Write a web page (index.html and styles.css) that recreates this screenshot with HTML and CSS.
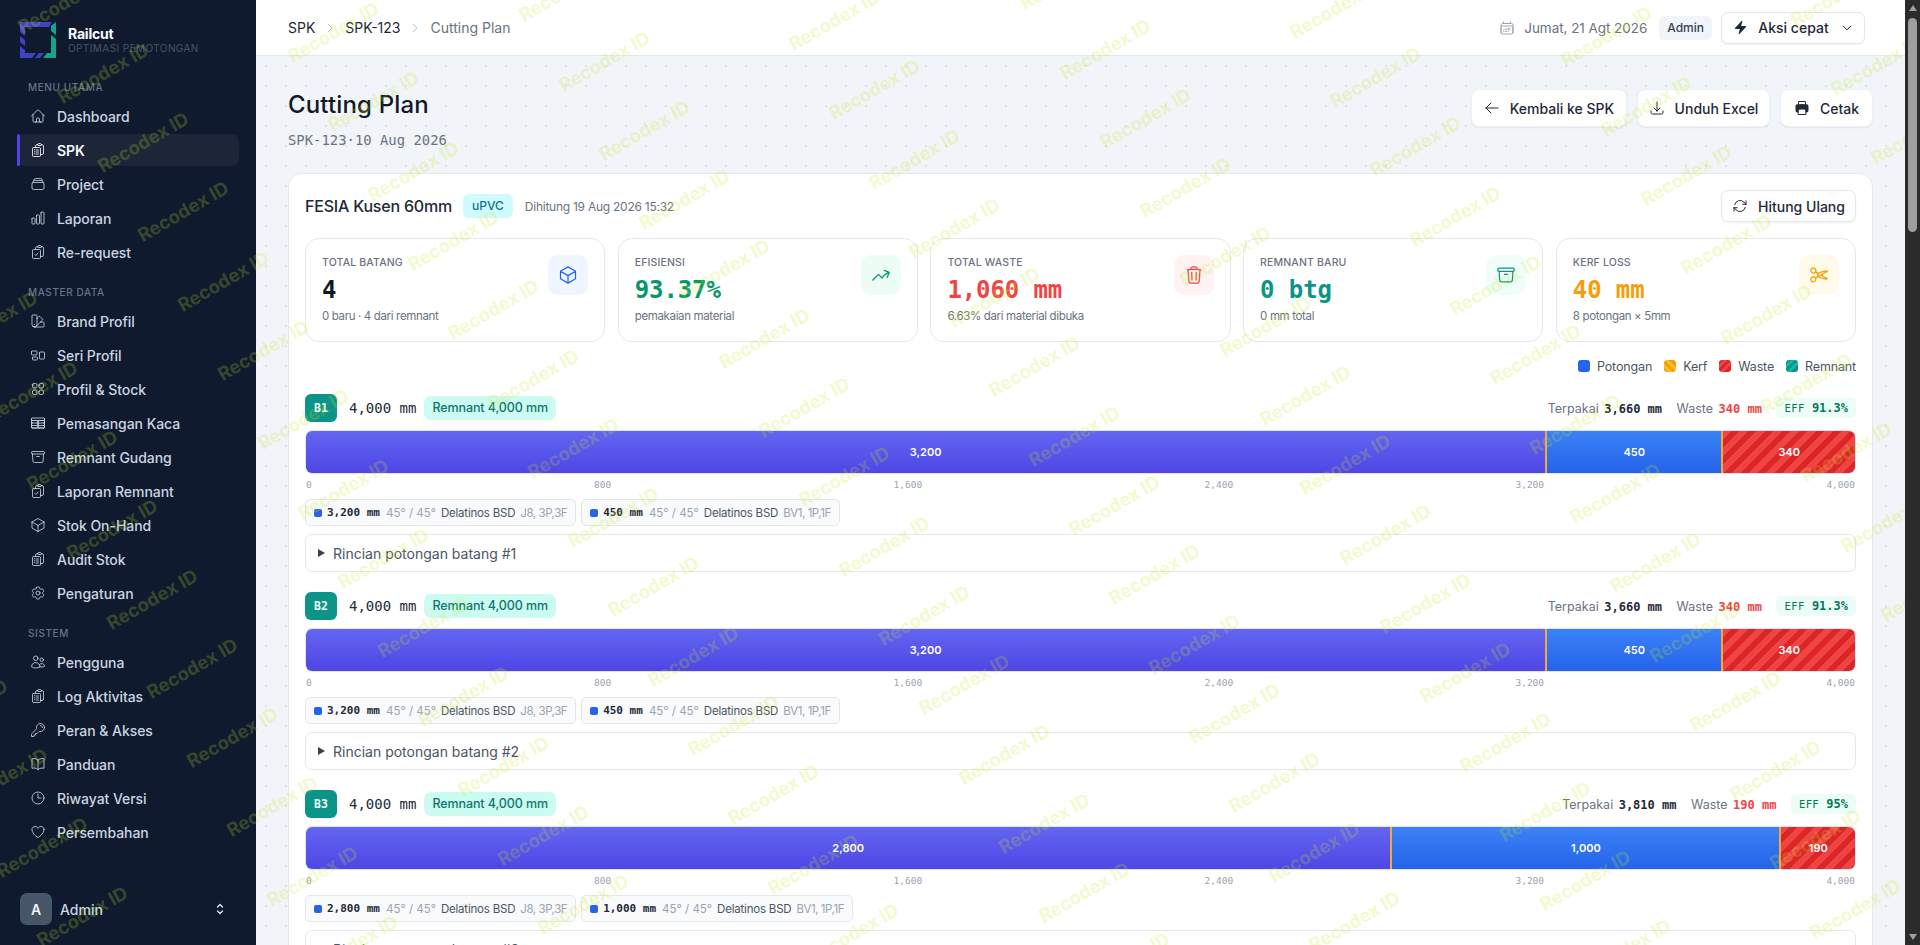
FILE: index.html
```html
<!DOCTYPE html>
<html lang="id">
<head>
<meta charset="utf-8">
<title>Cutting Plan - Railcut</title>
<link rel="stylesheet" href="styles.css">
</head>
<body>
<svg class="sprite" xmlns="http://www.w3.org/2000/svg">
  <symbol id="i-home" viewBox="0 0 24 24"><path d="m2.25 12 8.954-8.955c.44-.439 1.152-.439 1.591 0L21.75 12M4.5 9.75v10.125c0 .621.504 1.125 1.125 1.125H9.75v-4.875c0-.621.504-1.125 1.125-1.125h2.25c.621 0 1.125.504 1.125 1.125V21h4.125c.621 0 1.125-.504 1.125-1.125V9.75M8.25 21h8.25"/></symbol>
  <symbol id="i-list" viewBox="0 0 24 24"><path d="M9 12h3.75M9 15h3.75M9 18h3.75m3 .75H18a2.25 2.25 0 0 0 2.25-2.25V6.108c0-1.135-.845-2.098-1.976-2.192a48.424 48.424 0 0 0-1.123-.08m-5.801 0c-.065.21-.1.433-.1.664 0 .414.336.75.75.75h4.5a.75.75 0 0 0 .75-.75 2.25 2.25 0 0 0-.1-.664m-5.8 0A2.251 2.251 0 0 1 13.5 2.25H15c1.012 0 1.867.668 2.15 1.586m-5.8 0c-.376.023-.75.05-1.124.08C9.095 4.01 8.25 4.973 8.25 6.108V8.25m0 0H4.875c-.621 0-1.125.504-1.125 1.125v11.25c0 .621.504 1.125 1.125 1.125h9.75c.621 0 1.125-.504 1.125-1.125V9.375c0-.621-.504-1.125-1.125-1.125H8.25ZM6.75 12h.008v.008H6.75V12Zm0 3h.008v.008H6.75V15Zm0 3h.008v.008H6.75V18Z"/></symbol>
  <symbol id="i-stack" viewBox="0 0 24 24"><path d="M6 6.878V6a2.25 2.25 0 0 1 2.25-2.25h7.5A2.25 2.25 0 0 1 18 6v.878m-12 0c.235-.083.487-.128.75-.128h10.5c.263 0 .515.045.75.128m-12 0A2.25 2.25 0 0 0 4.5 9v.878m13.5-3A2.25 2.25 0 0 1 19.5 9v.878m0 0a2.246 2.246 0 0 0-.75-.128H5.25c-.263 0-.515.045-.75.128m15 0A2.25 2.25 0 0 1 21 12v6a2.25 2.25 0 0 1-2.25 2.25H5.25A2.25 2.25 0 0 1 3 18v-6c0-.98.626-1.813 1.5-2.122"/></symbol>
  <symbol id="i-chart" viewBox="0 0 24 24"><path d="M3 13.125C3 12.504 3.504 12 4.125 12h2.25c.621 0 1.125.504 1.125 1.125v6.75C7.5 20.496 6.996 21 6.375 21h-2.25A1.125 1.125 0 0 1 3 19.875v-6.75ZM9.75 8.625c0-.621.504-1.125 1.125-1.125h2.25c.621 0 1.125.504 1.125 1.125v11.25c0 .621-.504 1.125-1.125 1.125h-2.25a1.125 1.125 0 0 1-1.125-1.125V8.625ZM16.5 4.125c0-.621.504-1.125 1.125-1.125h2.25C20.496 3 21 3.504 21 4.125v15.75c0 .621-.504 1.125-1.125 1.125h-2.25a1.125 1.125 0 0 1-1.125-1.125V4.125Z"/></symbol>
  <symbol id="i-check" viewBox="0 0 24 24"><path d="M11.35 3.836c-.065.21-.1.433-.1.664 0 .414.336.75.75.75h4.5a.75.75 0 0 0 .75-.75 2.25 2.25 0 0 0-.1-.664m-5.8 0A2.251 2.251 0 0 1 13.5 2.25H15c1.012 0 1.867.668 2.15 1.586m-5.8 0c-.376.023-.75.05-1.124.08C9.095 4.01 8.25 4.973 8.25 6.108V8.25m8.9-4.414c.376.023.75.05 1.124.08 1.131.094 1.976 1.057 1.976 2.192V16.5A2.25 2.25 0 0 1 18 18.75h-2.25m-7.5-10.5H4.875c-.621 0-1.125.504-1.125 1.125v11.25c0 .621.504 1.125 1.125 1.125h9.75c.621 0 1.125-.504 1.125-1.125V18.75m-7.5-10.5h6.375c.621 0 1.125.504 1.125 1.125v9.375m-8.25-3 1.5 1.5 3-3.75"/></symbol>
  <symbol id="i-swatch" viewBox="0 0 24 24"><path d="M4.098 19.902a3.75 3.75 0 0 0 5.304 0l6.401-6.402M6.75 21A3.75 3.75 0 0 1 3 17.25V4.125C3 3.504 3.504 3 4.125 3h5.25c.621 0 1.125.504 1.125 1.125v4.072M6.75 21a3.75 3.75 0 0 0 3.75-3.75V8.197M6.75 21h13.125c.621 0 1.125-.504 1.125-1.125v-5.25c0-.621-.504-1.125-1.125-1.125h-4.072M10.5 8.197l2.88-2.88c.438-.439 1.15-.439 1.59 0l3.712 3.713c.44.44.44 1.152 0 1.59l-2.879 2.88M6.75 17.25h.008v.008H6.75v-.008Z"/></symbol>
  <symbol id="i-group" viewBox="0 0 24 24"><path d="M2.25 7.125C2.25 6.504 2.754 6 3.375 6h6c.621 0 1.125.504 1.125 1.125v3.75c0 .621-.504 1.125-1.125 1.125h-6a1.125 1.125 0 0 1-1.125-1.125v-3.75ZM14.25 8.625c0-.621.504-1.125 1.125-1.125h5.25c.621 0 1.125.504 1.125 1.125v8.25c0 .621-.504 1.125-1.125 1.125h-5.25a1.125 1.125 0 0 1-1.125-1.125v-8.25ZM3.75 16.125c0-.621.504-1.125 1.125-1.125h5.25c.621 0 1.125.504 1.125 1.125v2.25c0 .621-.504 1.125-1.125 1.125h-5.25a1.125 1.125 0 0 1-1.125-1.125v-2.25Z"/></symbol>
  <symbol id="i-grid" viewBox="0 0 24 24"><path d="M3.75 6A2.25 2.25 0 0 1 6 3.75h2.25A2.25 2.25 0 0 1 10.5 6v2.25a2.25 2.25 0 0 1-2.25 2.25H6a2.25 2.25 0 0 1-2.25-2.25V6ZM3.75 15.75A2.25 2.25 0 0 1 6 13.5h2.25a2.25 2.25 0 0 1 2.25 2.25V18a2.25 2.25 0 0 1-2.25 2.25H6A2.25 2.25 0 0 1 3.75 18v-2.25ZM13.5 6a2.25 2.25 0 0 1 2.25-2.25H18A2.25 2.25 0 0 1 20.25 6v2.25A2.25 2.25 0 0 1 18 10.5h-2.25a2.25 2.25 0 0 1-2.25-2.25V6ZM13.5 15.75a2.25 2.25 0 0 1 2.25-2.25H18a2.25 2.25 0 0 1 2.25 2.25V18A2.25 2.25 0 0 1 18 20.25h-2.25A2.25 2.25 0 0 1 13.5 18v-2.25Z"/></symbol>
  <symbol id="i-table" viewBox="0 0 24 24"><path d="M3.375 19.5h17.25m-17.25 0a1.125 1.125 0 0 1-1.125-1.125M3.375 19.5h7.5c.621 0 1.125-.504 1.125-1.125m-9.75 0V5.625m0 12.75v-1.5c0-.621.504-1.125 1.125-1.125m18.375 2.625V5.625m0 12.75c0 .621-.504 1.125-1.125 1.125m1.125-1.125v-1.5c0-.621-.504-1.125-1.125-1.125m0 3.75h-7.5A1.125 1.125 0 0 1 12 18.375m9.75-12.75c0-.621-.504-1.125-1.125-1.125H3.375c-.621 0-1.125.504-1.125 1.125m19.5 0v1.5c0 .621-.504 1.125-1.125 1.125M2.25 5.625v1.5c0 .621.504 1.125 1.125 1.125m0 0h17.25m-17.25 0h7.5c.621 0 1.125.504 1.125 1.125M3.375 8.25c-.621 0-1.125.504-1.125 1.125v1.5c0 .621.504 1.125 1.125 1.125m17.25-3.75h-7.5c-.621 0-1.125.504-1.125 1.125m8.625-1.125c.621 0 1.125.504 1.125 1.125v1.5c0 .621-.504 1.125-1.125 1.125m-17.25 0h7.5m-7.5 0c-.621 0-1.125.504-1.125 1.125v1.5c0 .621.504 1.125 1.125 1.125M12 10.875v-1.5m0 1.5c0 .621-.504 1.125-1.125 1.125M12 10.875c0 .621.504 1.125 1.125 1.125m-2.25 0c.621 0 1.125.504 1.125 1.125M13.125 12h7.5m-7.5 0c-.621 0-1.125.504-1.125 1.125M20.625 12c.621 0 1.125.504 1.125 1.125v1.5c0 .621-.504 1.125-1.125 1.125m-17.25 0h7.5M12 14.625v-1.5m0 1.5c0 .621-.504 1.125-1.125 1.125M12 14.625c0 .621.504 1.125 1.125 1.125m-2.25 0c.621 0 1.125.504 1.125 1.125m0 1.5v-1.5m0 0c0-.621.504-1.125 1.125-1.125m0 0h7.5"/></symbol>
  <symbol id="i-archive" viewBox="0 0 24 24"><path d="m20.25 7.5-.625 10.632a2.25 2.25 0 0 1-2.247 2.118H6.622a2.25 2.25 0 0 1-2.247-2.118L3.75 7.5M10 11.25h4M3.375 7.5h17.25c.621 0 1.125-.504 1.125-1.125v-1.5c0-.621-.504-1.125-1.125-1.125H3.375c-.621 0-1.125.504-1.125 1.125v1.5c0 .621.504 1.125 1.125 1.125Z"/></symbol>
  <symbol id="i-cube" viewBox="0 0 24 24"><path d="m21 7.5-9-5.25L3 7.5m18 0-9 5.25m9-5.25v9l-9 5.25M3 7.5l9 5.25M3 7.5v9l9 5.25m0-9v9"/></symbol>
  <symbol id="i-cog" viewBox="0 0 24 24"><path d="M9.594 3.94c.09-.542.56-.94 1.11-.94h2.593c.55 0 1.02.398 1.11.94l.213 1.281c.063.374.313.686.645.87.074.04.147.083.22.127.325.196.72.257 1.075.124l1.217-.456a1.125 1.125 0 0 1 1.37.49l1.296 2.247a1.125 1.125 0 0 1-.26 1.431l-1.003.827c-.293.241-.438.613-.43.992a7.723 7.723 0 0 1 0 .255c-.008.378.137.75.43.991l1.004.827c.424.35.534.955.26 1.43l-1.298 2.247a1.125 1.125 0 0 1-1.369.491l-1.217-.456c-.355-.133-.75-.072-1.076.124a6.47 6.47 0 0 1-.22.128c-.331.183-.581.495-.644.869l-.213 1.281c-.09.543-.56.94-1.11.94h-2.594c-.55 0-1.019-.398-1.11-.94l-.213-1.281c-.062-.374-.312-.686-.644-.87a6.52 6.52 0 0 1-.22-.127c-.325-.196-.72-.257-1.076-.124l-1.217.456a1.125 1.125 0 0 1-1.369-.49l-1.297-2.247a1.125 1.125 0 0 1 .26-1.431l1.004-.827c.292-.24.437-.613.43-.991a6.932 6.932 0 0 1 0-.255c.007-.38-.138-.751-.43-.992l-1.004-.827a1.125 1.125 0 0 1-.26-1.43l1.297-2.247a1.125 1.125 0 0 1 1.37-.491l1.216.456c.356.133.751.072 1.076-.124.072-.044.146-.086.22-.128.332-.183.582-.495.644-.869l.214-1.28Z"/><path d="M15 12a3 3 0 1 1-6 0 3 3 0 0 1 6 0Z"/></symbol>
  <symbol id="i-users" viewBox="0 0 24 24"><path d="M15 19.128a9.38 9.38 0 0 0 2.625.372 9.337 9.337 0 0 0 4.121-.952 4.125 4.125 0 0 0-7.533-2.493M15 19.128v-.003c0-1.113-.285-2.16-.786-3.07M15 19.128v.106A12.318 12.318 0 0 1 8.624 21c-2.331 0-4.512-.645-6.374-1.766l-.001-.109a6.375 6.375 0 0 1 11.964-3.07M12 6.375a3.375 3.375 0 1 1-6.75 0 3.375 3.375 0 0 1 6.75 0Zm8.25 2.25a2.625 2.625 0 1 1-5.25 0 2.625 2.625 0 0 1 5.25 0Z"/></symbol>
  <symbol id="i-key" viewBox="0 0 24 24"><path d="M15.75 5.25a3 3 0 0 1 3 3m3 0a6 6 0 0 1-7.029 5.912c-.563-.097-1.159.026-1.563.43L10.5 17.25H8.25v2.25H6v2.25H2.25v-2.818c0-.597.237-1.17.659-1.591l6.499-6.499c.404-.404.527-1 .43-1.563A6 6 0 1 1 21.75 8.25Z"/></symbol>
  <symbol id="i-book" viewBox="0 0 24 24"><path d="M12 6.042A8.967 8.967 0 0 0 6 3.75c-1.052 0-2.062.18-3 .512v14.25A8.987 8.987 0 0 1 6 18c2.305 0 4.408.867 6 2.292m0-14.25a8.966 8.966 0 0 1 6-2.292c1.052 0 2.062.18 3 .512v14.25A8.987 8.987 0 0 0 18 18a8.967 8.967 0 0 0-6 2.292m0-14.25v14.25"/></symbol>
  <symbol id="i-clock" viewBox="0 0 24 24"><path d="M12 6v6h4.5m4.5 0a9 9 0 1 1-18 0 9 9 0 0 1 18 0Z"/></symbol>
  <symbol id="i-heart" viewBox="0 0 24 24"><path d="M21 8.25c0-2.485-2.099-4.5-4.688-4.5-1.935 0-3.597 1.126-4.312 2.733-.715-1.607-2.377-2.733-4.312-2.733C5.1 3.75 3 5.765 3 8.25c0 7.22 9 12 9 12s9-4.78 9-12Z"/></symbol>
  <symbol id="i-updown" viewBox="0 0 24 24"><path d="M8.25 15 12 18.75 15.75 15m-7.5-6L12 5.25 15.75 9"/></symbol>
  <symbol id="i-cal" viewBox="0 0 24 24"><path d="M6.75 3v2.25M17.25 3v2.25M3 18.75V7.5a2.25 2.25 0 0 1 2.25-2.25h13.5A2.25 2.25 0 0 1 21 7.5v11.25m-18 0A2.25 2.25 0 0 0 5.25 21h13.5A2.25 2.25 0 0 0 21 18.75m-18 0v-7.5A2.25 2.25 0 0 1 5.25 9h13.5A2.25 2.25 0 0 1 21 11.25v7.5m-9-6h.008v.008H12v-.008ZM12 15h.008v.008H12V15Zm0 2.25h.008v.008H12v-.008ZM9.75 15h.008v.008H9.75V15Zm0 2.25h.008v.008H9.75v-.008ZM7.5 15h.008v.008H7.5V15Zm0 2.25h.008v.008H7.5v-.008Zm6.75-4.5h.008v.008h-.008v-.008Zm0 2.25h.008v.008h-.008V15Zm0 2.25h.008v.008h-.008v-.008Zm2.25-4.5h.008v.008H16.5v-.008Zm0 2.25h.008v.008H16.5V15Z"/></symbol>
  <symbol id="i-down" viewBox="0 0 24 24"><path d="m19.5 8.25-7.5 7.5-7.5-7.5"/></symbol>
  <symbol id="i-right" viewBox="0 0 24 24"><path d="m8.25 4.5 7.5 7.5-7.5 7.5"/></symbol>
  <symbol id="i-left" viewBox="0 0 24 24"><path d="M10.5 19.5 3 12m0 0 7.5-7.5M3 12h18"/></symbol>
  <symbol id="i-tray" viewBox="0 0 24 24"><path d="M3 16.5v2.25A2.25 2.25 0 0 0 5.25 21h13.5A2.25 2.25 0 0 0 21 18.75V16.5M16.5 12 12 16.5m0 0L7.5 12m4.5 4.5V3"/></symbol>
  <symbol id="i-refresh" viewBox="0 0 24 24"><path d="M16.023 9.348h4.992v-.001M2.985 19.644v-4.992m0 0h4.992m-4.993 0 3.181 3.183a8.25 8.25 0 0 0 13.803-3.7M4.031 9.865a8.25 8.25 0 0 1 13.803-3.7l3.181 3.182m0-4.991v4.99"/></symbol>
  <symbol id="i-trend" viewBox="0 0 24 24"><path d="M2.25 18 9 11.25l4.306 4.306a11.95 11.95 0 0 1 5.814-5.518l2.74-1.22m0 0-5.94-2.281m5.94 2.28-2.28 5.941"/></symbol>
  <symbol id="i-trash" viewBox="0 0 24 24"><path d="m14.74 9-.346 9m-4.788 0L9.26 9m9.968-3.21c.342.052.682.107 1.022.166m-1.022-.165L18.16 19.673a2.25 2.25 0 0 1-2.244 2.077H8.084a2.25 2.25 0 0 1-2.244-2.077L4.772 5.79m14.456 0a48.108 48.108 0 0 0-3.478-.397m-12 .562c.34-.059.68-.114 1.022-.165m0 0a48.11 48.11 0 0 1 3.478-.397m7.5 0v-.916c0-1.18-.91-2.164-2.09-2.201a51.964 51.964 0 0 0-3.32 0c-1.18.037-2.09 1.022-2.09 2.201v.916m7.5 0a48.667 48.667 0 0 0-7.5 0"/></symbol>
  <symbol id="i-scissors" viewBox="0 0 24 24"><path d="m7.848 8.25 1.536.887M7.848 8.25a3 3 0 1 1-5.196-3 3 3 0 0 1 5.196 3Zm1.536.887a2.165 2.165 0 0 1 1.083 1.839c.005.351.054.695.14 1.024M9.384 9.137l2.077 1.199M7.848 15.75l1.536-.887m-1.536.887a3 3 0 1 1-5.196 3 3 3 0 0 1 5.196-3Zm1.536-.887a2.165 2.165 0 0 0 1.083-1.838c.005-.352.054-.695.14-1.025m-1.223 2.863 2.077-1.199m0-3.328a4.323 4.323 0 0 1 2.068-1.379l5.325-1.628a4.5 4.5 0 0 1 2.48-.044l.803.215-7.794 4.5m-2.882-1.664A4.33 4.33 0 0 0 10.607 12m3.736 0 7.794 4.5-.802.215a4.5 4.5 0 0 1-2.48-.043l-5.326-1.629a4.324 4.324 0 0 1-2.068-1.379M14.343 12l-2.882 1.664"/></symbol>
  <symbol id="i-bolt" viewBox="0 0 24 24"><path class="solid" d="M14.615 1.595a.75.75 0 0 1 .359.852L12.982 9.75h7.268a.75.75 0 0 1 .548 1.262l-10.5 11.25a.75.75 0 0 1-1.272-.71l1.992-7.302H3.75a.75.75 0 0 1-.548-1.262l10.5-11.25a.75.75 0 0 1 .913-.143Z"/></symbol>
  <symbol id="i-print" viewBox="0 0 24 24"><path class="solid" fill-rule="evenodd" d="M7.875 1.5C6.839 1.5 6 2.34 6 3.375v2.99c-.426.053-.851.11-1.274.174-1.454.218-2.476 1.483-2.476 2.917v6.294a3 3 0 0 0 3 3h.27l-.155 1.705A1.875 1.875 0 0 0 7.232 22.5h9.536a1.875 1.875 0 0 0 1.867-2.045l-.155-1.705h.27a3 3 0 0 0 3-3V9.456c0-1.434-1.022-2.7-2.476-2.917A48.716 48.716 0 0 0 18 6.366V3.375c0-1.036-.84-1.875-1.875-1.875h-8.25ZM16.5 6.205v-2.83A.375.375 0 0 0 16.125 3h-8.25a.375.375 0 0 0-.375.375v2.83a49.353 49.353 0 0 1 9 0Zm-.217 8.265c.178.018.317.16.333.337l.526 5.784a.375.375 0 0 1-.374.409H7.232a.375.375 0 0 1-.374-.409l.526-5.784a.373.373 0 0 1 .333-.337 41.741 41.741 0 0 1 8.566 0Z"/></symbol>
</svg>

<div class="app">
  <aside class="sidebar">
    <div class="brand">
      <svg class="logo" viewBox="0 0 36 36">
        <polygon class="logo-blue" points="0,0 32,0 29,5 5,5 5,14 0,10"/>
        <polygon class="logo-blue" points="0,14 5,18 5,24 0,20"/>
        <polygon class="logo-blue" points="0,24 5,28 5,31 16,31 12,36 0,36"/>
        <polygon class="logo-blue" points="19,31 24,31 20,36 15,36"/>
        <polygon class="logo-teal" points="36,0 36,13 31,9 31,4"/>
        <polygon class="logo-teal" points="31,13 36,17 36,36 23,36 27,31 31,31"/>
      </svg>
      <div class="brand-text">
        <div class="brand-name">Railcut</div>
        <div class="brand-sub">OPTIMASI PEMOTONGAN</div>
      </div>
    </div>

    <div class="nav-label">MENU UTAMA</div>
    <nav class="nav">
      <a class="nav-item"><svg class="ic"><use href="#i-home"/></svg>Dashboard</a>
      <a class="nav-item active"><svg class="ic"><use href="#i-list"/></svg>SPK</a>
      <a class="nav-item"><svg class="ic"><use href="#i-stack"/></svg>Project</a>
      <a class="nav-item"><svg class="ic"><use href="#i-chart"/></svg>Laporan</a>
      <a class="nav-item"><svg class="ic"><use href="#i-check"/></svg>Re-request</a>
    </nav>
    <div class="nav-label">MASTER DATA</div>
    <nav class="nav">
      <a class="nav-item"><svg class="ic"><use href="#i-swatch"/></svg>Brand Profil</a>
      <a class="nav-item"><svg class="ic"><use href="#i-group"/></svg>Seri Profil</a>
      <a class="nav-item"><svg class="ic"><use href="#i-grid"/></svg>Profil &amp; Stock</a>
      <a class="nav-item"><svg class="ic"><use href="#i-table"/></svg>Pemasangan Kaca</a>
      <a class="nav-item"><svg class="ic"><use href="#i-archive"/></svg>Remnant Gudang</a>
      <a class="nav-item"><svg class="ic"><use href="#i-check"/></svg>Laporan Remnant</a>
      <a class="nav-item"><svg class="ic"><use href="#i-cube"/></svg>Stok On-Hand</a>
      <a class="nav-item"><svg class="ic"><use href="#i-list"/></svg>Audit Stok</a>
      <a class="nav-item"><svg class="ic"><use href="#i-cog"/></svg>Pengaturan</a>
    </nav>
    <div class="nav-label">SISTEM</div>
    <nav class="nav">
      <a class="nav-item"><svg class="ic"><use href="#i-users"/></svg>Pengguna</a>
      <a class="nav-item"><svg class="ic"><use href="#i-list"/></svg>Log Aktivitas</a>
      <a class="nav-item"><svg class="ic"><use href="#i-key"/></svg>Peran &amp; Akses</a>
      <a class="nav-item"><svg class="ic"><use href="#i-book"/></svg>Panduan</a>
      <a class="nav-item"><svg class="ic"><use href="#i-clock"/></svg>Riwayat Versi</a>
      <a class="nav-item"><svg class="ic"><use href="#i-heart"/></svg>Persembahan</a>
    </nav>

    <div class="user">
      <div class="avatar">A</div>
      <div class="user-name">Admin</div>
      <svg class="ic user-caret"><use href="#i-updown"/></svg>
    </div>
  </aside>

  <div class="main">
    <header class="topbar">
      <div class="crumbs">
        <a class="crumb">SPK</a>
        <svg class="ic crumb-sep"><use href="#i-right"/></svg>
        <a class="crumb">SPK-123</a>
        <svg class="ic crumb-sep"><use href="#i-right"/></svg>
        <span class="crumb-cur">Cutting Plan</span>
      </div>
      <div class="top-right">
        <svg class="ic date-ic"><use href="#i-cal"/></svg>
        <span class="date">Jumat, 21 Agt 2026</span>
        <span class="role">Admin</span>
        <button class="btn btn-quick"><svg class="ic ic-solid"><use href="#i-bolt"/></svg>Aksi cepat<svg class="ic caret"><use href="#i-down"/></svg></button>
      </div>
    </header>

    <main class="content">
      <div class="page-head">
        <div>
          <h1 class="title">Cutting Plan</h1>
          <div class="subtitle">SPK-123·10 Aug 2026</div>
        </div>
        <div class="actions">
          <button class="btn btn-lg btn-back"><svg class="ic"><use href="#i-left"/></svg>Kembali ke SPK</button>
          <button class="btn btn-lg btn-excel"><svg class="ic"><use href="#i-tray"/></svg>Unduh Excel</button>
          <button class="btn btn-lg btn-print"><svg class="ic ic-solid"><use href="#i-print"/></svg>Cetak</button>
        </div>
      </div>

      <section class="card">
        <div class="card-head">
          <div class="card-title-wrap">
            <h2 class="card-title">FESIA Kusen 60mm</h2>
            <span class="pill-cyan">uPVC</span>
            <span class="computed">Dihitung 19 Aug 2026 15:32</span>
          </div>
          <button class="btn btn-sm"><svg class="ic"><use href="#i-refresh"/></svg>Hitung Ulang</button>
        </div>

        <div class="stats">
          <div class="stat">
            <div class="stat-body"><div class="stat-label">TOTAL BATANG</div><div class="stat-val c-ink">4</div><div class="stat-sub">0 baru · 4 dari remnant</div></div>
            <div class="stat-ic bg-blue"><svg class="ic"><use href="#i-cube"/></svg></div>
          </div>
          <div class="stat">
            <div class="stat-body"><div class="stat-label">EFISIENSI</div><div class="stat-val c-green">93.37%</div><div class="stat-sub">pemakaian material</div></div>
            <div class="stat-ic bg-green"><svg class="ic"><use href="#i-trend"/></svg></div>
          </div>
          <div class="stat">
            <div class="stat-body"><div class="stat-label">TOTAL WASTE</div><div class="stat-val c-red">1,060 mm</div><div class="stat-sub">6.63% dari material dibuka</div></div>
            <div class="stat-ic bg-red"><svg class="ic"><use href="#i-trash"/></svg></div>
          </div>
          <div class="stat">
            <div class="stat-body"><div class="stat-label">REMNANT BARU</div><div class="stat-val c-teal">0 btg</div><div class="stat-sub">0 mm total</div></div>
            <div class="stat-ic bg-teal"><svg class="ic"><use href="#i-archive"/></svg></div>
          </div>
          <div class="stat">
            <div class="stat-body"><div class="stat-label">KERF LOSS</div><div class="stat-val c-amber">40 mm</div><div class="stat-sub">8 potongan × 5mm</div></div>
            <div class="stat-ic bg-amber"><svg class="ic"><use href="#i-scissors"/></svg></div>
          </div>
        </div>

        <div class="legend">
          <span class="lg"><i class="sw sw-cut"></i>Potongan</span>
          <span class="lg"><i class="sw sw-kerf"></i>Kerf</span>
          <span class="lg"><i class="sw sw-waste"></i>Waste</span>
          <span class="lg"><i class="sw sw-rem"></i>Remnant</span>
        </div>

        <div class="batang">
          <div class="b-head">
            <div class="b-left"><span class="b-badge">B1</span><span class="b-len">4,000 mm</span><span class="pill-teal">Remnant 4,000 mm</span></div>
            <div class="b-right"><span class="m-label">Terpakai <b class="m-val">3,660 mm</b></span><span class="m-label">Waste <b class="m-waste">340 mm</b></span><span class="eff"><span class="eff-k">EFF</span> <b>91.3%</b></span></div>
          </div>
          <div class="bar">
            <div class="seg seg-main" style="flex:3200">3,200</div><div class="seg seg-kerf" style="flex:5"></div><div class="seg seg-cut" style="flex:450">450</div><div class="seg seg-kerf" style="flex:5"></div><div class="seg seg-waste" style="flex:340">340</div>
          </div>
          <div class="axis"><span>0</span><span>800</span><span>1,600</span><span>2,400</span><span>3,200</span><span>4,000</span></div>
          <div class="chips">
            <div class="chip"><i class="chip-dot"></i><b class="chip-len">3,200 mm</b><span class="chip-ang">45° / 45°</span><span class="chip-name">Delatinos BSD</span><span class="chip-code">J8, 3P,3F</span></div>
            <div class="chip"><i class="chip-dot"></i><b class="chip-len">450 mm</b><span class="chip-ang">45° / 45°</span><span class="chip-name">Delatinos BSD</span><span class="chip-code">BV1, 1P,1F</span></div>
          </div>
          <details class="detail"><summary>Rincian potongan batang #1</summary></details>
        </div>

        <div class="batang">
          <div class="b-head">
            <div class="b-left"><span class="b-badge">B2</span><span class="b-len">4,000 mm</span><span class="pill-teal">Remnant 4,000 mm</span></div>
            <div class="b-right"><span class="m-label">Terpakai <b class="m-val">3,660 mm</b></span><span class="m-label">Waste <b class="m-waste">340 mm</b></span><span class="eff"><span class="eff-k">EFF</span> <b>91.3%</b></span></div>
          </div>
          <div class="bar">
            <div class="seg seg-main" style="flex:3200">3,200</div><div class="seg seg-kerf" style="flex:5"></div><div class="seg seg-cut" style="flex:450">450</div><div class="seg seg-kerf" style="flex:5"></div><div class="seg seg-waste" style="flex:340">340</div>
          </div>
          <div class="axis"><span>0</span><span>800</span><span>1,600</span><span>2,400</span><span>3,200</span><span>4,000</span></div>
          <div class="chips">
            <div class="chip"><i class="chip-dot"></i><b class="chip-len">3,200 mm</b><span class="chip-ang">45° / 45°</span><span class="chip-name">Delatinos BSD</span><span class="chip-code">J8, 3P,3F</span></div>
            <div class="chip"><i class="chip-dot"></i><b class="chip-len">450 mm</b><span class="chip-ang">45° / 45°</span><span class="chip-name">Delatinos BSD</span><span class="chip-code">BV1, 1P,1F</span></div>
          </div>
          <details class="detail"><summary>Rincian potongan batang #2</summary></details>
        </div>

        <div class="batang">
          <div class="b-head">
            <div class="b-left"><span class="b-badge">B3</span><span class="b-len">4,000 mm</span><span class="pill-teal">Remnant 4,000 mm</span></div>
            <div class="b-right"><span class="m-label">Terpakai <b class="m-val">3,810 mm</b></span><span class="m-label">Waste <b class="m-waste">190 mm</b></span><span class="eff"><span class="eff-k">EFF</span> <b>95%</b></span></div>
          </div>
          <div class="bar">
            <div class="seg seg-main" style="flex:2800">2,800</div><div class="seg seg-kerf" style="flex:5"></div><div class="seg seg-cut" style="flex:1000">1,000</div><div class="seg seg-kerf" style="flex:5"></div><div class="seg seg-waste" style="flex:190">190</div>
          </div>
          <div class="axis"><span>0</span><span>800</span><span>1,600</span><span>2,400</span><span>3,200</span><span>4,000</span></div>
          <div class="chips">
            <div class="chip"><i class="chip-dot"></i><b class="chip-len">2,800 mm</b><span class="chip-ang">45° / 45°</span><span class="chip-name">Delatinos BSD</span><span class="chip-code">J8, 3P,3F</span></div>
            <div class="chip"><i class="chip-dot"></i><b class="chip-len">1,000 mm</b><span class="chip-ang">45° / 45°</span><span class="chip-name">Delatinos BSD</span><span class="chip-code">BV1, 1P,1F</span></div>
          </div>
          <details class="detail"><summary>Rincian potongan batang #3</summary></details>
        </div>
      </section>
    </main>
  </div>
</div>
<div class="watermarks" id="watermarks"></div>
<div class="scrollbar"><i class="sb-up"></i><i class="sb-thumb"></i><i class="sb-down"></i></div>
<script src="watermark.js"></script>
</body>
</html>
```

FILE: styles.css
```css
* { box-sizing: border-box; }
html { height: 100%; }
body {
  margin: 0;
  font-family: "Inter", "Noto Sans", sans-serif;
  font-size: 14px;
  color: #1f2937;
  background-color: #f1f5f9;
}
button { font-family: inherit; }
.sprite { position: absolute; width: 0; height: 0; overflow: hidden; }
.ic { width: 16px; height: 16px; flex: none; fill: none; stroke: currentColor; stroke-width: 1.5; stroke-linecap: round; stroke-linejoin: round; }
.ic-solid { fill: currentColor; stroke: none; }

.app { display: flex; align-items: flex-start; min-height: 4020px; margin-right: 15px; }

/* Window scrollbar */
.scrollbar { position: fixed; top: 0; right: 0; bottom: 0; width: 15px; background: #2b2b2b; z-index: 30; display: flex; flex-direction: column; align-items: center; padding: 5px 0; }
.sb-up { width: 0; height: 0; border: 4.5px solid transparent; border-top: 0; border-bottom: 6px solid #9f9f9f; }
.sb-thumb { width: 9px; height: 214px; margin-top: 7px; background: #9f9f9f; border-radius: 5px; }
.sb-down { width: 0; height: 0; margin-top: auto; border: 4.5px solid transparent; border-bottom: 0; border-top: 6px solid #9f9f9f; }

/* Sidebar */
.sidebar {
  position: sticky; top: 0;
  width: 256px; height: 100vh; flex: none;
  display: flex; flex-direction: column;
  padding: 22px 17px 20px;
  background: #0f1a2e;
  color: #cbd5e1;
}
.brand { display: flex; align-items: center; gap: 12px; padding-left: 3px; margin-bottom: 22px; height: 36px; }
.logo { width: 36px; height: 36px; flex: none; }
.logo-blue { fill: #4040c8; }
.logo-teal { fill: #14a38f; }
.brand-name { font-size: 14px; font-weight: 700; color: #f8fafc; line-height: 17px; letter-spacing: -.2px; }
.brand-sub { font-size: 10px; letter-spacing: .42px; color: #475569; line-height: 13px; white-space: nowrap; }
.nav-label { font-size: 10px; letter-spacing: .6px; color: #64748b; padding-left: 11px; line-height: 14px; margin: 17px 0 6px; font-weight: 500; }
.brand + .nav-label { margin-top: 0; }
.nav { display: flex; flex-direction: column; gap: 2px; }
.nav-item {
  position: relative;
  display: flex; align-items: center; gap: 11px;
  height: 32px; padding-left: 13px;
  font-size: 14px; font-weight: 500; color: #cbd5e1; letter-spacing: -.05px;
  border-radius: 8px;
}
.nav-item .ic { width: 16px; height: 16px; stroke-width: 1.25; }
.nav-item.active { background: #1c2638; color: #f8fafc; font-weight: 600; }
.nav-item.active::before { content: ""; position: absolute; left: 0; top: 0; bottom: 0; width: 3px; background: #4f46e5; border-radius: 2px; }
.user { margin-top: auto; display: flex; align-items: center; padding-left: 3px; gap: 8px; }
.avatar { width: 32px; height: 32px; border-radius: 7px; background: #475569; color: #f1f5f9; display: flex; align-items: center; justify-content: center; font-weight: 600; font-size: 14px; }
.user-name { flex: 1; font-size: 14px; font-weight: 500; color: #cbd5e1; }
.user-caret { color: #e2e8f0; margin-right: 11px; stroke-width: 2; }

/* Main */
.main { flex: 1; min-width: 0; }
.topbar {
  position: sticky; top: 0; z-index: 5;
  height: 56px; display: flex; align-items: center; justify-content: space-between;
  padding: 0 40px 0 32px;
  background: #fff; border-bottom: 1px solid #e5e7eb;
}
.crumbs { display: flex; align-items: center; gap: 9px; font-size: 14px; color: #1f2937; }
.crumb-cur { color: #6b7280; }
.crumb-sep { width: 12px; height: 12px; color: #9ca3af; }
.top-right { display: flex; align-items: center; }
.date-ic { color: #9ca3af; margin-right: 9px; }
.date { font-size: 13.5px; color: #6b7280; margin-right: 12px; letter-spacing: -.05px; }
.role { font-size: 12px; font-weight: 500; color: #374151; background: #f1f5f9; border-radius: 6px; padding: 0 8px; height: 24px; line-height: 24px; margin-right: 9px; }
.btn {
  display: inline-flex; align-items: center; justify-content: center;
  background: #fff; border: 1px solid #e5e7eb; border-radius: 7px;
  color: #1f2937; font-weight: 500; cursor: pointer;
  box-shadow: 0 1px 2px rgba(15, 23, 42, .06);
}
.btn-quick { width: 144px; height: 32px; font-size: 14px; gap: 10px; }
.btn-quick .ic-solid { width: 15px; height: 15px; }
.caret { width: 12px; height: 12px; stroke-width: 2; margin-left: 2px; }
.btn-lg { height: 38px; padding: 0; font-size: 14px; gap: 10px; border-radius: 8px; border-color: #eef0f3; }
.btn-back { width: 156px; }
.btn-excel { width: 133px; }
.btn-print { width: 93px; }
.btn-sm { width: 135px; height: 32px; font-size: 14px; gap: 10px; }

.content {
  padding: 32px 32px 40px;
  background-image: radial-gradient(#dde3ea 1px, transparent 1px);
  background-size: 20px 20px;
  min-height: 3964px;
}
.page-head { display: flex; justify-content: space-between; align-items: flex-start; height: 85px; }
.title { margin: 0; font-size: 24px; line-height: 34px; font-weight: 500; color: #111827; letter-spacing: .15px; }
.subtitle { margin-top: 9px; font-family: "DejaVu Sans Mono", monospace; font-size: 13.9px; color: #6b7280; line-height: 18px; }
.actions { display: flex; gap: 10px; margin-top: 1px; }

.card { background: #fff; border: 1px solid #e5e7eb; border-radius: 14px; padding: 16px; }
.card-head { display: flex; justify-content: space-between; align-items: center; height: 32px; }
.card-title-wrap { display: flex; align-items: center; gap: 11px; }
.card-title { margin: 0; font-size: 16px; font-weight: 500; color: #1f2937; letter-spacing: -.2px; }
.pill-cyan { height: 24px; line-height: 24px; padding: 0 9px; font-size: 12px; font-weight: 500; color: #0e7490; background: #cffafe; border-radius: 6px; }
.computed { font-size: 12px; color: #6b7280; margin-left: 1px; letter-spacing: -.25px; }

.stats { display: grid; grid-template-columns: repeat(5, 1fr); gap: 12.5px; margin-top: 16px; }
.stat { height: 104px; border: 1px solid #e5e7eb; border-radius: 14px; padding: 16px 16px 0 16px; display: flex; justify-content: space-between; align-items: flex-start; }
.stat-label { font-size: 10.5px; font-weight: 500; letter-spacing: .15px; color: #6b7280; line-height: 14px; margin-top: 1px; }
.stat-val { font-family: "DejaVu Sans Mono", monospace; font-size: 24px; font-weight: 700; line-height: 32px; margin-top: 4px; letter-spacing: -.1px; }
.stat-sub { font-size: 11.5px; color: #6b7280; line-height: 16px; margin-top: 2px; letter-spacing: -.35px; }
.stat-ic { width: 40px; height: 40px; border-radius: 10px; display: flex; align-items: center; justify-content: center; }
.stat-ic .ic { width: 20px; height: 20px; }
.c-ink { color: #111827; } .c-green { color: #059669; } .c-red { color: #ef4444; } .c-teal { color: #0d9488; } .c-amber { color: #f59e0b; }
.bg-blue { background: #eff6ff; color: #2563eb; }
.bg-green { background: #ecfdf5; color: #059669; }
.bg-red { background: #fef2f2; color: #ef4444; }
.bg-teal { background: #f0fdfa; color: #0d9488; }
.bg-amber { background: #fffbeb; color: #f59e0b; }

.legend { display: flex; justify-content: flex-end; gap: 12px; margin-top: 15px; height: 18px; align-items: center; }
.lg { display: inline-flex; align-items: center; gap: 7px; font-size: 12.5px; color: #4b5563; letter-spacing: -.15px; }
.sw { width: 12px; height: 12px; border-radius: 3px; display: block; flex: none; }
.sw-cut { background: #2563eb; }
.sw-kerf { background: repeating-linear-gradient(45deg, #f59e0b 0 3px, #fbbf24 3px 6px); }
.sw-waste { background: repeating-linear-gradient(135deg, #dc2626 0 3px, #ef4444 3px 6px); }
.sw-rem { background: repeating-linear-gradient(135deg, #0d9488 0 3px, #14b8a6 3px 6px); }

.batang { margin-top: 19px; }
.batang + .batang { margin-top: 20px; }
.b-head { display: flex; justify-content: space-between; align-items: center; height: 28px; }
.b-left { display: flex; align-items: center; }
.b-badge { width: 32px; height: 28px; border-radius: 6px; background: #0d9488; color: #ecfdf5; font-family: "DejaVu Sans Mono", monospace; font-size: 11.5px; font-weight: 700; display: flex; align-items: center; justify-content: center; margin-right: 12px; }
.b-len { font-family: "DejaVu Sans Mono", monospace; font-size: 14px; font-weight: 500; color: #1f2937; margin-right: 8px; }
.pill-teal { height: 24px; line-height: 24px; padding: 0 8px; font-size: 12.5px; font-weight: 500; color: #0f766e; background: #ccfbf1; border-radius: 7px; letter-spacing: -.1px; }
.b-right { display: flex; align-items: center; gap: 14.5px; font-size: 12.5px; }
.m-label { color: #6b7280; }
.m-val { font-family: "DejaVu Sans Mono", monospace; font-size: 12px; font-weight: 700; color: #1f2937; margin-left: 2px; }
.m-waste { font-family: "DejaVu Sans Mono", monospace; font-size: 12px; font-weight: 700; color: #ef4444; margin-left: 2px; }
.eff { height: 20px; line-height: 20px; padding: 0 8px; background: #ecfdf5; border-radius: 5px; font-family: "DejaVu Sans Mono", monospace; font-size: 12px; color: #047857; white-space: nowrap; }
.eff-k { font-size: 10.5px; font-weight: 500; letter-spacing: .4px; }
.eff b { font-weight: 700; }

.bar { display: flex; height: 44px; margin-top: 8px; border: 1px solid #e2e4f0; border-radius: 7px; overflow: hidden; }
.seg { min-width: 0; display: flex; align-items: center; justify-content: center; color: #fff; font-size: 11px; font-weight: 600; }
.seg-main { background: linear-gradient(#6366f1, #4f46e5); }
.seg-cut { background: linear-gradient(#3b82f6, #2563eb); }
.seg-kerf { background: #f1a93a; }
.seg-waste { background: repeating-linear-gradient(135deg, #ef4444 0 6px, #dc2626 6px 12px); }

.axis { display: flex; justify-content: space-between; padding: 0 1px; margin-top: 4px; font-family: "DejaVu Sans Mono", monospace; font-size: 9.5px; color: #9ca3af; line-height: 14px; }
.chips { display: flex; gap: 5px; margin-top: 7px; }
.chip { display: flex; align-items: center; height: 27px; padding: 0 8px; background: #f8fafc; border: 1px solid #e5e7eb; border-radius: 5px; font-size: 11.5px; white-space: nowrap; }
.chip-dot { width: 8px; height: 8px; background: #2563eb; border-radius: 2px; margin-right: 5px; }
.chip-len { font-family: "DejaVu Sans Mono", monospace; font-size: 11px; font-weight: 700; color: #1f2937; margin-right: 6px; }
.chip-ang { color: #9ca3af; margin-right: 5px; }
.chip-name { color: #4b5563; margin-right: 5px; letter-spacing: -.2px; }
.chip-code { color: #9ca3af; letter-spacing: -.45px; }
.detail { margin-top: 8px; border: 1px solid #e5e7eb; border-radius: 7px; height: 38px; }
.detail summary { display: flex; align-items: center; gap: 8px; height: 36px; padding-left: 12px; font-size: 14px; color: #4b5563; list-style: none; }
.detail summary::-webkit-details-marker { display: none; }
.detail summary::before { content: ""; width: 0; height: 0; border-left: 7px solid #374151; border-top: 4.5px solid transparent; border-bottom: 4.5px solid transparent; }

/* Watermark */
.watermarks { position: fixed; top: 0; left: 0; width: 1905px; height: 100vh; overflow: hidden; pointer-events: none; z-index: 20; }
.wm { position: absolute; transform: translate(-50%, -50%) rotate(-30deg); font-family: "Inter", sans-serif; font-weight: 700; font-size: 18.5px; color: rgba(198, 232, 40, .22); white-space: nowrap; }
```

FILE: watermark.js
```js
// Tiled "Recodex ID" watermark: a 220 x 80 lattice turned by -30 degrees.
(function () {
  var host = document.getElementById('watermarks');
  var ox = 333, oy = 32;
  for (var i = -14; i <= 14; i++) {
    for (var j = -14; j <= 28; j++) {
      var x = ox + 190.5 * i + 40 * j;
      var y = oy - 110 * i + 69.3 * j;
      if (x < -120 || x > 2020 || y < -80 || y > 1020) continue;
      var s = document.createElement('span');
      s.className = 'wm';
      s.textContent = 'Recodex ID';
      s.style.left = x + 'px';
      s.style.top = y + 'px';
      host.appendChild(s);
    }
  }
})();
```
